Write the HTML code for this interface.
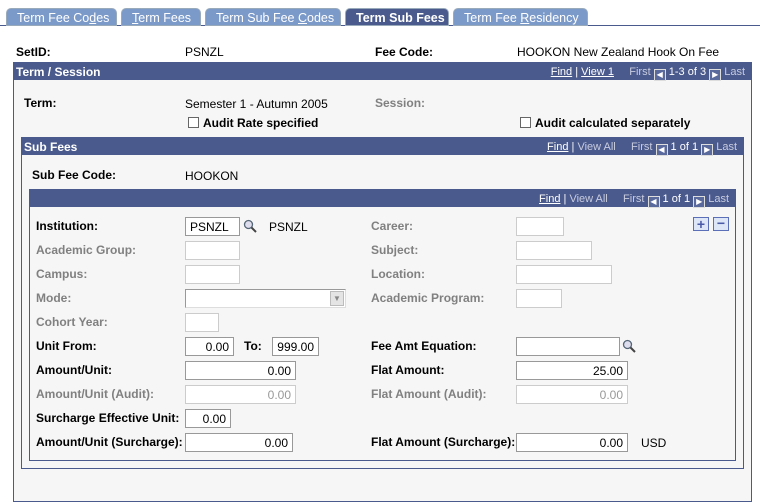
<!DOCTYPE html>
<html><head><style>
*{margin:0;padding:0;box-sizing:border-box}
body{width:760px;height:493px;background:#fff;position:relative;overflow:hidden;font-family:"Liberation Sans",Arial,sans-serif;font-size:12px;color:#000}
.a{position:absolute;white-space:nowrap}
.b{font-weight:bold}
.g{color:#808080}
.tab{position:absolute;top:8px;height:18px;background:#7b9ac9;color:#fff;font-size:12.5px;padding:2px 0 0 10px;border-radius:5px 5px 0 0;border:1px solid #9ab}
.tab.on{background:#4a5a8c;font-weight:bold;color:#fff}
.box{position:absolute;background:#f6f6f6;border:1px solid #4a5a8c}
.hd{position:absolute;left:0;right:0;top:0;height:17px;background:#4a5a8c;color:#fff}
.hd .t{position:absolute;left:2px;top:2px;font-weight:bold}
.nav{position:absolute;right:6px;top:3px;font-size:11px;color:#fff}
.nav u{color:#fff}
.nav .d{color:#c8cce0}
.arr{display:inline-block;width:12px;height:12px;border:1px solid #ddd;background:#5a6a9c;vertical-align:-2px;position:relative;color:#fff;font-size:8px;line-height:10px;text-align:center}
.in{position:absolute;height:19px;background:#fff;border:1px solid #999;font-size:12px;padding:2px 4px;text-align:right}
.in.l{text-align:left}
.in.dis{border-color:#ccc;color:#999}
.cb{position:absolute;width:11px;height:11px;border:1px solid #666;background:#fff}
</style></head><body>
<div class="a" style="left:0;top:25px;width:760px;height:1px;background:#4a5a8c"></div>
<div class="tab" style="left:6px;width:111px">Term Fee Co<u>d</u>es</div>
<div class="tab" style="left:121px;width:80px"><u>T</u>erm Fees</div>
<div class="tab" style="left:205px;width:136px">Term Sub Fee <u>C</u>odes</div>
<div class="tab on" style="left:345px;width:104px">Term Sub Fees</div>
<div class="tab" style="left:453px;width:135px">Term Fee <u>R</u>esidency</div>

<div class="a b" style="left:16px;top:45px">SetID:</div>
<div class="a" style="left:185px;top:45px">PSNZL</div>
<div class="a b" style="left:375px;top:45px">Fee Code:</div>
<div class="a" style="left:517px;top:45px">HOOKON New Zealand Hook On Fee</div>

<div class="box" style="left:13px;top:62px;width:739px;height:440px">
 <div class="hd"><span class="t">Term / Session</span><span class="nav"><u>Find</u> | <u>View 1</u> &nbsp;&nbsp;&nbsp;&nbsp;<span class="d">First</span> <span class="arr">◀</span> 1-3 of 3 <span class="arr">▶</span> <span class="d">Last</span></span></div>
</div>
<div class="a b" style="left:24px;top:96px">Term:</div>
<div class="a" style="left:185px;top:97px">Semester 1 - Autumn 2005</div>
<div class="a b g" style="left:375px;top:96px">Session:</div>
<div class="cb" style="left:188px;top:117px"></div><div class="a b" style="left:203px;top:116px">Audit Rate specified</div>
<div class="cb" style="left:520px;top:117px"></div><div class="a b" style="left:535px;top:116px">Audit calculated separately</div>

<div class="box" style="left:21px;top:137px;width:723px;height:332px">
 <div class="hd"><span class="t">Sub Fees</span><span class="nav"><u>Find</u> | <span class="d">View All</span> &nbsp;&nbsp;&nbsp;&nbsp;<span class="d">First</span> <span class="arr">◀</span> 1 of 1 <span class="arr">▶</span> <span class="d">Last</span></span></div>
</div>
<div class="a b" style="left:32px;top:168px">Sub Fee Code:</div>
<div class="a" style="left:185px;top:169px">HOOKON</div>

<div class="box" style="left:29px;top:189px;width:707px;height:272px">
 <div class="hd"><span class="nav"><u>Find</u> | <span class="d">View All</span> &nbsp;&nbsp;&nbsp;&nbsp;<span class="d">First</span> <span class="arr">◀</span> 1 of 1 <span class="arr">▶</span> <span class="d">Last</span></span></div>
</div>
<div class="a" style="left:693px;top:217px;width:16px;height:14px;border:1px solid #5b6fb8;background:#dde6f7;color:#4a5aa8;font-weight:bold;text-align:center;line-height:12px;font-size:14px">+</div>
<div class="a" style="left:713px;top:217px;width:16px;height:14px;border:1px solid #5b6fb8;background:#dde6f7;color:#4a5aa8;font-weight:bold;text-align:center;line-height:11px;font-size:14px">−</div>

<div class="a b" style="left:36px;top:219px">Institution:</div>
<div class="in l" style="left:185px;top:217px;width:55px">PSNZL</div>
<svg class="a" style="left:243px;top:219px" width="14" height="14"><circle cx="5.5" cy="5.5" r="4" fill="#dde" stroke="#567" stroke-width="1.3"/><line x1="8.5" y1="8.5" x2="13" y2="13" stroke="#444" stroke-width="2"/></svg>
<div class="a" style="left:269px;top:220px">PSNZL</div>
<div class="a b g" style="left:36px;top:243px">Academic Group:</div><div class="in dis" style="left:185px;top:241px;width:55px"></div>
<div class="a b g" style="left:36px;top:267px">Campus:</div><div class="in dis" style="left:185px;top:265px;width:55px"></div>
<div class="a b g" style="left:36px;top:291px">Mode:</div><div class="in dis" style="left:185px;top:289px;width:161px;border-color:#999 #ddd #ddd #999"></div>
<div class="a" style="left:330px;top:291px;width:14px;height:15px;background:#e4e4e4;border:1px solid #bbb;color:#888;font-size:8px;text-align:center;line-height:14px">▼</div>
<div class="a b g" style="left:36px;top:315px">Cohort Year:</div><div class="in dis" style="left:185px;top:313px;width:34px"></div>
<div class="a b" style="left:36px;top:339px">Unit From:</div><div class="in" style="left:185px;top:337px;width:49px">0.00</div>
<div class="a b" style="left:244px;top:339px">To:</div><div class="in" style="left:272px;top:337px;width:47px">999.00</div>
<div class="a b" style="left:36px;top:363px">Amount/Unit:</div><div class="in" style="left:185px;top:361px;width:111px">0.00</div>
<div class="a b g" style="left:36px;top:387px">Amount/Unit (Audit):</div><div class="in dis" style="left:185px;top:385px;width:111px">0.00</div>
<div class="a b" style="left:36px;top:411px">Surcharge Effective Unit:</div><div class="in" style="left:185px;top:409px;width:46px">0.00</div>
<div class="a b" style="left:36px;top:435px">Amount/Unit (Surcharge):</div><div class="in" style="left:185px;top:433px;width:108px">0.00</div>

<div class="a b g" style="left:371px;top:219px">Career:</div><div class="in dis" style="left:516px;top:217px;width:48px"></div>
<div class="a b g" style="left:371px;top:243px">Subject:</div><div class="in dis" style="left:516px;top:241px;width:76px"></div>
<div class="a b g" style="left:371px;top:267px">Location:</div><div class="in dis" style="left:516px;top:265px;width:96px"></div>
<div class="a b g" style="left:371px;top:291px">Academic Program:</div><div class="in dis" style="left:516px;top:289px;width:46px"></div>
<div class="a b" style="left:371px;top:339px">Fee Amt Equation:</div><div class="in" style="left:516px;top:337px;width:104px"></div>
<svg class="a" style="left:622px;top:339px" width="14" height="14"><circle cx="5.5" cy="5.5" r="4" fill="#dde" stroke="#567" stroke-width="1.3"/><line x1="8.5" y1="8.5" x2="13" y2="13" stroke="#444" stroke-width="2"/></svg>
<div class="a b" style="left:371px;top:363px">Flat Amount:</div><div class="in" style="left:516px;top:361px;width:112px">25.00</div>
<div class="a b g" style="left:371px;top:387px">Flat Amount (Audit):</div><div class="in dis" style="left:516px;top:385px;width:112px">0.00</div>
<div class="a b" style="left:371px;top:435px">Flat Amount (Surcharge):</div><div class="in" style="left:516px;top:433px;width:112px">0.00</div>
<div class="a" style="left:641px;top:436px">USD</div>
</body></html>
